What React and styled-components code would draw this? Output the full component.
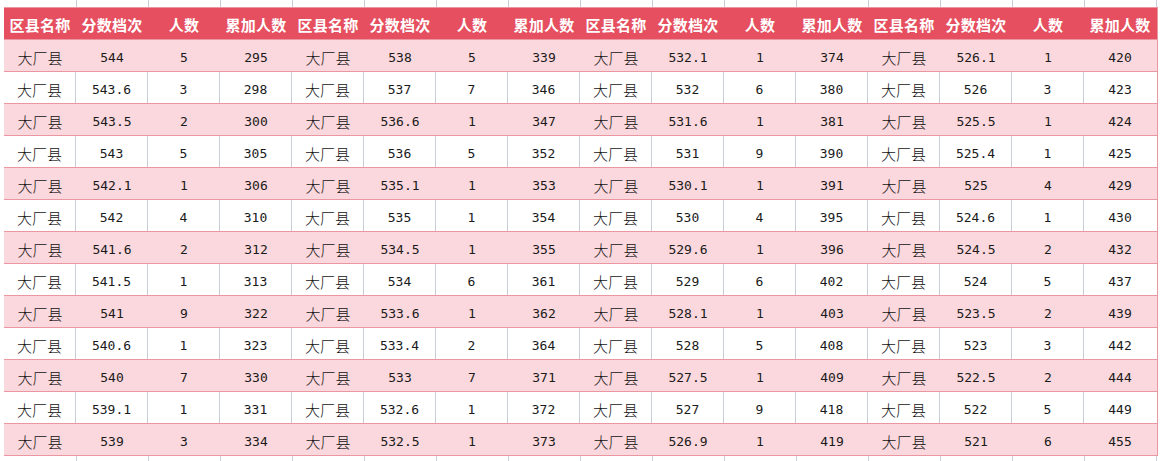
import React from "react";
import styled, { createGlobalStyle } from "styled-components";

const GlobalStyle = createGlobalStyle`
  html, body {
    margin: 0;
    padding: 0;
    background: #ffffff;
  }
  body {
    font-family: "Noto Sans CJK SC", "DejaVu Sans", sans-serif;
    overflow: hidden;
  }
`;

const COL_W = 72;
const GRID = "#c9ced8";
const PINK_LINE = "#eb97a2";

const Sheet = styled.div`
  width: 1162px;
  height: 461px;
  overflow: hidden;
  display: flex;
  flex-direction: column;
`;

const Table = styled.div`
  display: flex;
  flex-direction: column;
  width: 1152px;
  border-left: 1px solid ${PINK_LINE};
  border-right: 1px solid ${PINK_LINE};
  margin-left: 4px;
  flex: none;
`;

const Edge = styled.div`
  display: flex;
  height: ${(p) => p.$h}px;
  flex: none;
  padding-left: 5px;
`;

const GridCell = styled.div`
  width: ${COL_W}px;
  flex: none;
  box-sizing: border-box;
  border-right: 1px solid ${GRID};
`;

const TableRow = styled.div`
  display: grid;
  grid-template-columns: repeat(16, ${COL_W}px);
  height: 32px;
  box-sizing: border-box;
  background: ${(p) =>
    p.$kind === "head" ? "#e54f60" : p.$kind === "pink" ? "#fad8dd" : "#ffffff"};
  border-top: 1px solid ${PINK_LINE};
  margin-left: -1px;
`;

const Cell = styled.div`
  display: flex;
  align-items: center;
  justify-content: center;
  padding-top: 3px;
  box-sizing: border-box;
  white-space: nowrap;
  color: #111111;
  border-right: ${(p) => (p.$grid ? `1px solid ${GRID}` : "none")};
  &:last-child {
    border-right: none;
  }
`;

const HeadCell = styled(Cell)`
  color: #ffffff;
  font-weight: 700;
  font-size: 15px;
  padding-top: 1px;
  letter-spacing: 0.3px;
`;

const Name = styled.span`
  font-family: "Noto Sans CJK SC", sans-serif;
  font-size: 15px;
  font-weight: 300;
`;

const Num = styled.span`
  font-family: "DejaVu Sans Mono", "Liberation Mono", monospace;
  font-size: 13px;
  color: #1a1a1a;
`;

const BottomLine = styled.div`
  height: 1px;
  background: ${PINK_LINE};
  margin-left: -1px;
  margin-right: -1px;
`;

const blocks = [
  [
    ["544", 5, 295], ["543.6", 3, 298], ["543.5", 2, 300], ["543", 5, 305],
    ["542.1", 1, 306], ["542", 4, 310], ["541.6", 2, 312], ["541.5", 1, 313],
    ["541", 9, 322], ["540.6", 1, 323], ["540", 7, 330], ["539.1", 1, 331],
    ["539", 3, 334],
  ],
  [
    ["538", 5, 339], ["537", 7, 346], ["536.6", 1, 347], ["536", 5, 352],
    ["535.1", 1, 353], ["535", 1, 354], ["534.5", 1, 355], ["534", 6, 361],
    ["533.6", 1, 362], ["533.4", 2, 364], ["533", 7, 371], ["532.6", 1, 372],
    ["532.5", 1, 373],
  ],
  [
    ["532.1", 1, 374], ["532", 6, 380], ["531.6", 1, 381], ["531", 9, 390],
    ["530.1", 1, 391], ["530", 4, 395], ["529.6", 1, 396], ["529", 6, 402],
    ["528.1", 1, 403], ["528", 5, 408], ["527.5", 1, 409], ["527", 9, 418],
    ["526.9", 1, 419],
  ],
  [
    ["526.1", 1, 420], ["526", 3, 423], ["525.5", 1, 424], ["525.4", 1, 425],
    ["525", 4, 429], ["524.6", 1, 430], ["524.5", 2, 432], ["524", 5, 437],
    ["523.5", 2, 439], ["523", 3, 442], ["522.5", 2, 444], ["522", 5, 449],
    ["521", 6, 455],
  ],
];

const headers = ["区县名称", "分数档次", "人数", "累加人数"];
const cols = Array.from({ length: 16 });

const EdgeStrip = ({ h }) => (
  <Edge $h={h}>
    {cols.map((_, i) => (
      <GridCell key={i} />
    ))}
  </Edge>
);

const App = () => {
  const rows = blocks[0].map((_, r) => blocks.map((b) => b[r]));
  return (
    <>
      <GlobalStyle />
      <Sheet>
        <EdgeStrip h={7} />
        <Table>
          <TableRow $kind="head">
            {blocks.map((_, b) =>
              headers.map((h) => <HeadCell key={`${b}-${h}`}>{h}</HeadCell>)
            )}
          </TableRow>
          {rows.map((row, r) => {
            const pink = r % 2 === 0;
            return (
              <TableRow key={r} $kind={pink ? "pink" : "white"}>
                {row.map(([score, count, total], b) => [
                  <Cell key={`${b}n`} $grid={!pink}>
                    <Name>大厂县</Name>
                  </Cell>,
                  <Cell key={`${b}s`} $grid={!pink}>
                    <Num>{score}</Num>
                  </Cell>,
                  <Cell key={`${b}c`} $grid={!pink}>
                    <Num>{count}</Num>
                  </Cell>,
                  <Cell key={`${b}t`} $grid={!pink}>
                    <Num>{total}</Num>
                  </Cell>,
                ])}
              </TableRow>
            );
          })}
          <BottomLine />
        </Table>
        <EdgeStrip h={10} />
      </Sheet>
    </>
  );
};

export default App;
